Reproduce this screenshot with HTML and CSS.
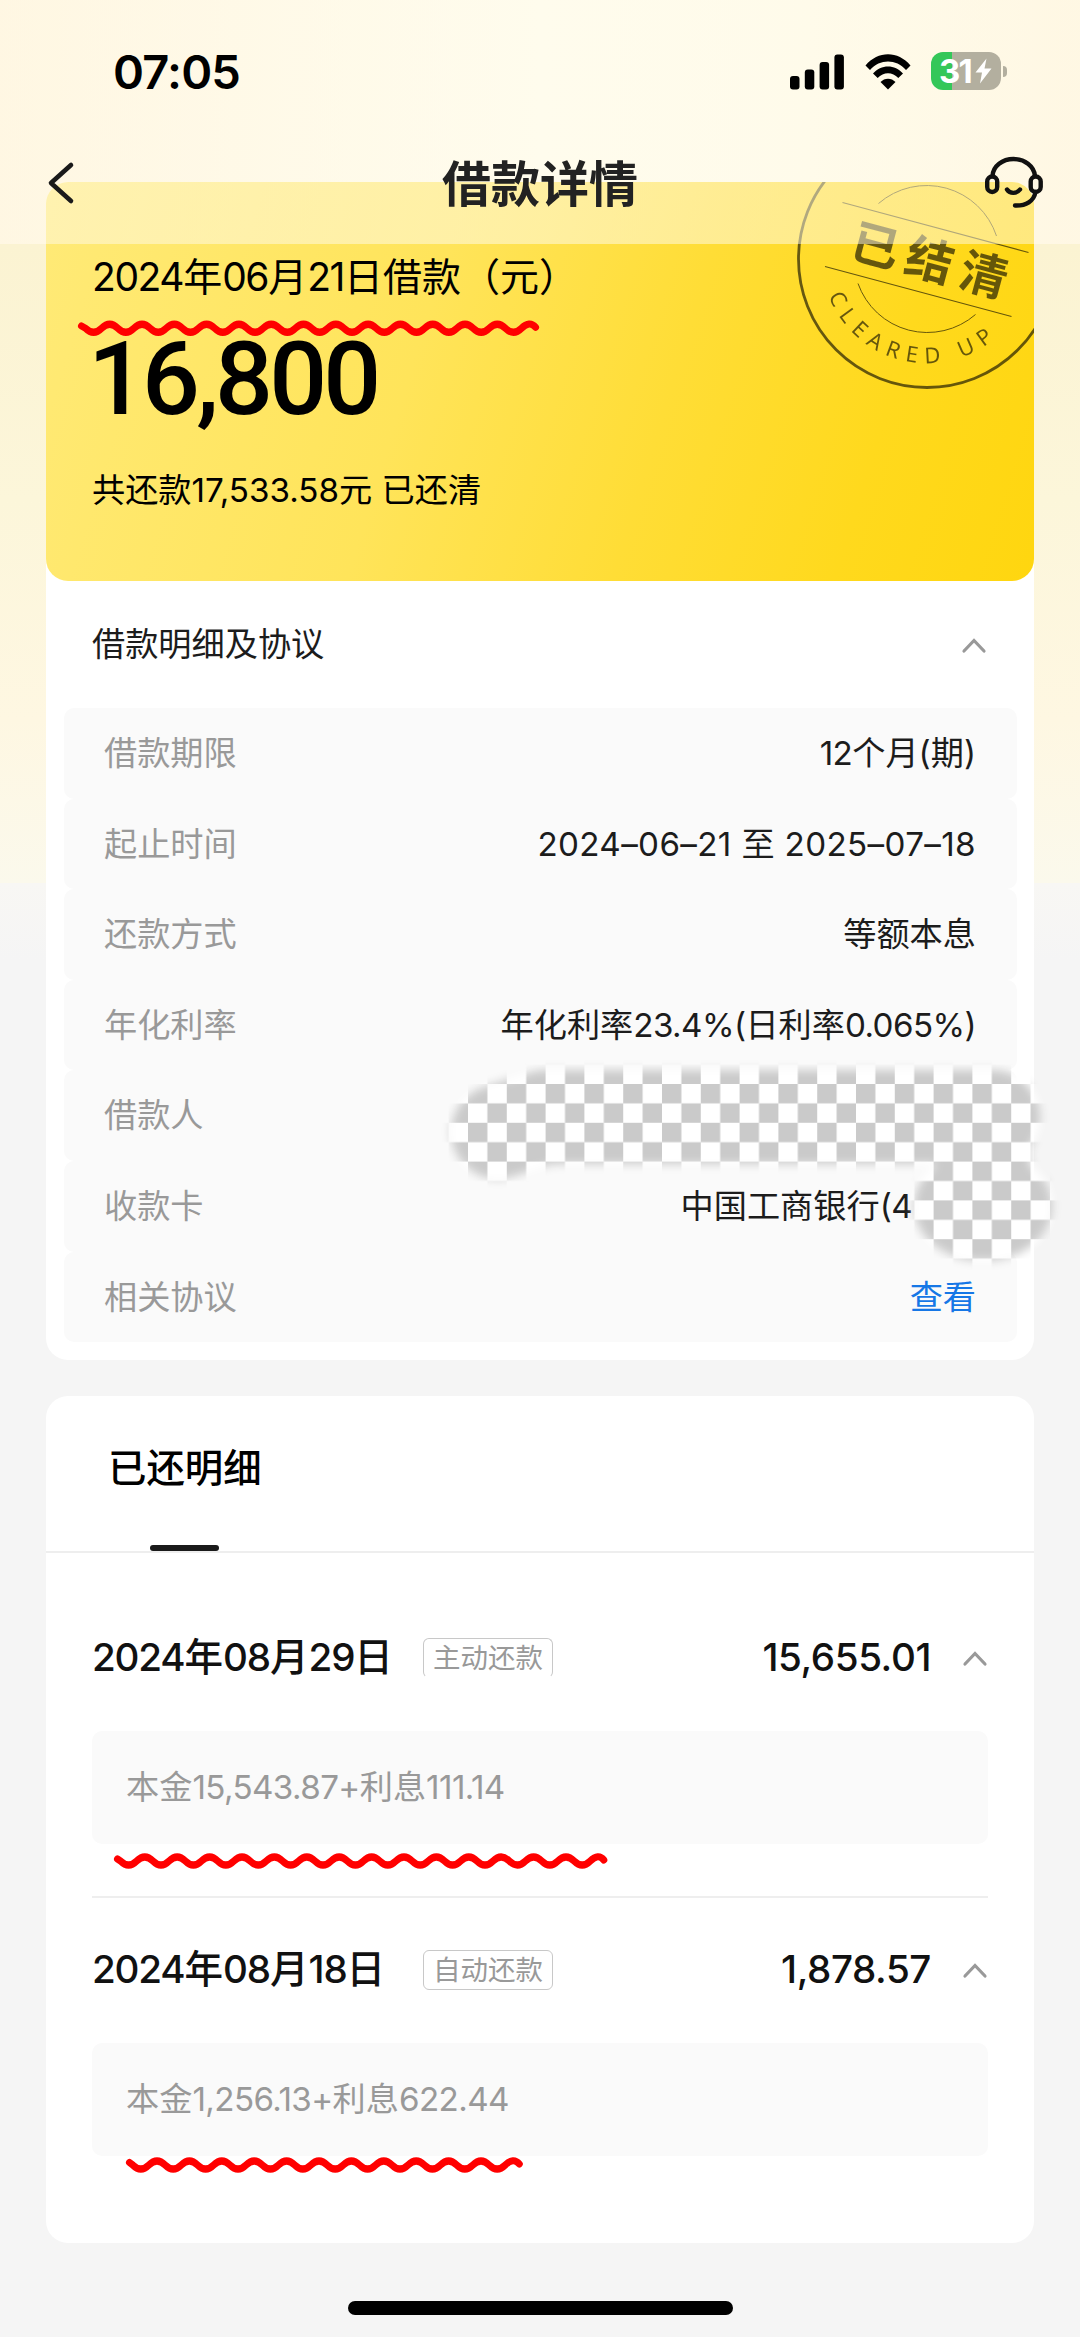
FILE: index.html
```
<!DOCTYPE html>
<html lang="zh-CN">
<head>
	<meta charset="UTF-8">
	<title>借款详情</title>
	<link rel="stylesheet" href="styles.css">
</head>
<body>
	<div class="page">
		<div class="header">
			<div class="status">
				<span class="time">07:05</span>
				<div class="status-icons">
					<svg class="signal" width="55" height="36" viewBox="0 0 55 36">
						<rect x="0" y="22" width="9.5" height="13.5" rx="3"/>
						<rect x="14.8" y="15.500" width="9.500" height="20" rx="3"/>
						<rect x="29.6" y="8" width="9.5" height="27.500" rx="3"/>
						<rect x="44.4" y="0.500" width="9.500" height="35" rx="3"/>
					</svg>
					<svg class="wifi" width="46" height="36" viewBox="0 0 46 36">
						<path d="M0.500 11.500C13 -3.500 33 -3.500 45.500 11.500L41 16C31 4.800 15 4.800 5 16Z"/>
						<path d="M8 19.500C16 10 30 10 38 19.500L33.300 24C27.500 17.500 18.500 17.500 12.700 24Z"/>
						<path d="M15.500 28C19.500 23.500 26.500 23.500 30.500 28L23 35.500Z"/>
					</svg>
					<div class="battery">
						<span>31</span>
						<svg width="17" height="26" viewBox="0 0 17 26"><path d="M11.500 0.500L0.500 14.500H7L5 25.500L16.500 10.500H9.500Z" fill="#fff"/></svg>
					</div>
				</div>
			</div>
			<div class="nav">
				<svg class="back" width="30" height="46" viewBox="0 0 30 46"><path d="M25 5L5 23L25 41"/></svg>
				<h1>借款详情</h1>
				<svg class="service" width="58" height="54" viewBox="0 0 58 54">
					<path d="M7.500 20C8 10 17.500 3 28.500 3S49 10 50 20"/>
					<rect x="2.200" y="20.500" width="10" height="15.500" rx="5"/>
					<rect x="45.700" y="20.500" width="10" height="15.500" rx="5"/>
					<path d="M50.500 36C49 45 41 50 30 49.500"/>
					<path d="M22 33.500C25 38 31.500 38 35 33.500"/>
				</svg>
			</div>
		</div>

		<div class="card">
			<div class="summary">
				<p class="sum-title"><b>2024</b>年<b>06</b>月<b>21</b>日借款（元）</p>
				<p class="sum-money">16,800</p>
				<p class="sum-total">共还款<b>17,533.58</b>元 已还清</p>
				<svg class="stamp" width="260" height="260" viewBox="0 0 260 260">
					<defs><path id="stampPath" d="M31.600 166.800A105.500 105.500 0 0 0 204 204"/></defs>
					<g fill="none" stroke="#000">
						<circle cx="130" cy="130" r="128.500" stroke-width="2.800"/>
						<path d="M81.500 74.500A73.500 73.500 0 0 1 199.500 107M61 154.500A73.500 73.500 0 0 0 178.500 185.500" stroke-width="1"/>
						<path d="M45.500 73.500L231.500 123.500M28 137.500L214.500 187.500" stroke-width="1.200"/>
					</g>
					<text class="stamp-cn" x="137" y="127" transform="rotate(15 130 130)">已结清</text>
					<text class="stamp-en"><textPath href="#stampPath" textLength="199">CLEARED UP</textPath></text>
				</svg>
			</div>
			<div class="fold">
				<span>借款明细及协议</span>
				<svg class="arrow" width="26" height="18" viewBox="0 0 26 18"><path d="M3 15L13 4.500L23 15"/></svg>
			</div>
			<ul class="info">
				<li><span>借款期限</span><em><b>12</b>个月(期)</em></li>
				<li><span>起止时间</span><em class="range">2024–06–21 至 2025–07–18</em></li>
				<li><span>还款方式</span><em>等额本息</em></li>
				<li><span>年化利率</span><em>年化利率<b>23.4%(</b>日利率<b>0.065%)</b></em></li>
				<li><span>借款人</span></li>
				<li><span>收款卡</span><em class="bank">中国工商银行<b>(4</b></em></li>
				<li><span>相关协议</span><a href="#">查看</a></li>
			</ul>
		</div>

		<div class="card paid">
			<div class="tabs"><span class="on">已还明细</span></div>
			<div class="record">
				<div class="row">
					<span class="date"><b>2024</b>年<b>08</b>月<b>29</b>日</span>
					<span class="tag tag-cut">主动还款</span>
					<span class="money">15,655.01</span>
					<svg class="arrow" width="26" height="18" viewBox="0 0 26 18"><path d="M3 15L13 4.500L23 15"/></svg>
				</div>
				<div class="detail">本金<b>15,543.87+</b>利息<b>111.14</b></div>
			</div>
			<div class="record">
				<div class="row">
					<span class="date"><b>2024</b>年<b>08</b>月<b>18</b>日</span>
					<span class="tag">自动还款</span>
					<span class="money">1,878.57</span>
					<svg class="arrow" width="26" height="18" viewBox="0 0 26 18"><path d="M3 15L13 4.500L23 15"/></svg>
				</div>
				<div class="detail">本金<b>1,256.13+</b>利息<b>622.44</b></div>
			</div>
		</div>

		<div class="home-bar"></div>

		<!-- red marks and the hidden name / card number -->
		<svg class="marks" width="1080" height="2337" viewBox="0 0 1080 2337">
			<defs>
				<pattern id="check" x="468" y="1084" width="38.800" height="38.800" patternUnits="userSpaceOnUse">
					<rect width="38.800" height="38.800" fill="#fff"/>
					<rect width="19.400" height="19.400" fill="#cacaca"/>
					<rect x="19.400" y="19.400" width="19.400" height="19.400" fill="#cacaca"/>
				</pattern>
				<filter id="soft" filterUnits="userSpaceOnUse" x="400" y="1020" width="680" height="280"><feGaussianBlur stdDeviation="5"/></filter>
				<mask id="brush" maskUnits="userSpaceOnUse" x="400" y="1020" width="680" height="280">
					<g filter="url(#soft)" fill="none" stroke="#fff" stroke-width="94" stroke-linecap="round" stroke-linejoin="round">
						<path d="M498 1132L545 1117H993"/>
						<path d="M983 1150V1162"/>
						<ellipse cx="983" cy="1206" rx="40" ry="26" stroke-width="58" fill="#fff"/>
					</g>
				</mask>
			</defs>
			<rect x="400" y="1020" width="680" height="280" fill="url(#check)" mask="url(#brush)"/>
			<g class="wave">
				<path d="M81.500 326L85.500 328.300q8.070 8 16.150 0t16.150 0t16.150 0t16.150 0t16.150 0t16.150 0t16.150 0t16.150 0t16.150 0t16.150 0t16.150 0t16.150 0t16.150 0t16.150 0t16.150 0t16.150 0t16.150 0t16.150 0t16.150 0t16.150 0t16.150 0t16.150 0t16.150 0t16.150 0t16.150 0t16.150 0t16.150 0t14 -1"/>
				<path d="M117.500 1859L120.500 1861q8.100 8 16.200 0t16.200 0t16.200 0t16.200 0t16.200 0t16.200 0t16.200 0t16.200 0t16.200 0t16.200 0t16.200 0t16.200 0t16.200 0t16.200 0t16.200 0t16.200 0t16.200 0t16.200 0t16.200 0t16.200 0t16.200 0t16.200 0t16.200 0t16.200 0t16.200 0t16.200 0t16.200 0t16.200 0t16.200 0t13.500 -1"/>
				<path d="M129.500 2162.500L132.700 2165q8.100 8 16.200 0t16.200 0t16.200 0t16.200 0t16.200 0t16.200 0t16.200 0t16.200 0t16.200 0t16.200 0t16.200 0t16.200 0t16.200 0t16.200 0t16.200 0t16.200 0t16.200 0t16.200 0t16.200 0t16.200 0t16.200 0t16.200 0t16.200 0t14 -1"/>
			</g>
		</svg>
	</div>
</body>
</html>
```
FILE: styles.css
```
body,h1,p,ul,li{margin: 0;padding: 0;}
ul{list-style: none;}
a{text-decoration: none;}
em{font-style: normal;}
body{font: 400 33.2px/1.5 Inter,"Noto Sans CJK SC",sans-serif;color: #1c1c1c;background: #f5f5f5;}
b{font-weight: inherit;letter-spacing: -0.018em;}
.page{position: relative;width: 1080px;height: 2337px;overflow: hidden;box-sizing: border-box;padding: 182px 46px 0;background: linear-gradient(180deg,rgba(245,245,245,0) 883px,#f8f7f4 883px,#f5f5f5 960px) no-repeat,linear-gradient(180deg,#fbf3d2 244px,#fcf6da 500px,#fef7e2 720px,#fbf9ec 883px);}

.header{position: absolute;top: 0;left: 0;z-index: 2;width: 1080px;height: 244px;background: linear-gradient(90deg,rgba(255,250,236,.48),rgba(255,253,242,.5) 50%,rgba(255,251,238,.48));}
.page:before{content: "";position: absolute;top: 0;left: 0;width: 1080px;height: 244px;background: linear-gradient(90deg,#fff4da,#fffbe8 50%,#fffae4 75%,#fff4da);}
.status{display: flex;justify-content: space-between;height: 144px;padding: 0 79px 0 113px;}
.time{padding-top: 36px;font: 600 47px/72px Inter;letter-spacing: -0.8px;color: #000;}
.status-icons{display: flex;align-items: flex-start;padding-top: 54px;}
.wifi{margin: 0 20px;}
.battery{position: relative;display: flex;align-items: center;box-sizing: border-box;width: 70px;height: 38px;margin-top: -2px;padding-left: 8px;border-radius: 12px;background: linear-gradient(90deg,#34c759 21.500px,#b3af9f 21.500px);font: 700 33px/38px Inter;letter-spacing: -1.8px;color: #fff;}
.battery svg{margin-left: 4px;}
.battery:after{content: "";position: absolute;right: -6px;top: 14px;width: 4px;height: 11px;border-radius: 0 5px 5px 0;background: #b3af9f;}
.nav{display: flex;justify-content: space-between;align-items: center;height: 77px;padding: 0 37px 0 46px;}
.nav h1{padding-left: 19px;font: 700 49px/72px "Noto Sans CJK SC",sans-serif;margin-top: -3px;color: #222;}
.back{fill: none;stroke: #1a1a1a;stroke-width: 4.600;stroke-linecap: round;stroke-linejoin: round;}
.service{fill: none;stroke: #111;stroke-width: 4.400;stroke-linecap: round;}

.card{position: relative;z-index: 1;background: #fff;border-radius: 22px;height: 1178px;}
.summary{position: relative;height: 399px;overflow: hidden;border-radius: 22px;box-sizing: border-box;padding: 65px 46px 0;background: linear-gradient(107deg,#ffea77 0%,#ffe45a 38%,#ffdd36 62%,#ffd91d 82%,#ffd60f 100%);color: #000;}
.sum-title{font-size: 39px;line-height: 60px;}
.sum-title b{letter-spacing: -0.036em;}
.sum-money{margin-left: -4px;font: 500 102px/120px Roboto,sans-serif;letter-spacing: -3.900px;padding-top: 12px;}
.sum-total{padding-top: 26px;line-height: 50px;}
.sum-total b{letter-spacing: 0;}
.stamp{position: absolute;left: 751px;top: -53px;opacity: .6;}
.stamp-cn{font: 700 48px "Noto Sans CJK SC";letter-spacing: 8px;text-anchor: middle;dominant-baseline: central;}
.stamp-en{font: 400 22px "Noto Sans";}
.fold{display: flex;justify-content: space-between;align-items: center;height: 127px;padding: 0 47px 0 46px;}
.arrow{fill: none;stroke: #999;stroke-width: 3.200;stroke-linecap: round;}
.info{padding: 0 17px 0 18px;}
.info li{display: flex;justify-content: space-between;height: 90.600px;line-height: 91.600px;padding: 0 41px 0 40px;border-radius: 10px;background: #fafafa;}
.info span{color: #999;}
.info .range{letter-spacing: 0.35px;}
.info .bank{padding-right: 64px;}
.info a{color: #1677e6;}

.paid{height: 847px;margin-top: 36px;}
.tabs{display: flex;height: 155px;padding-left: 62px;border-bottom: 2px solid #eee;}
.tabs span{position: relative;font-size: 38.400px;font-weight: 500;line-height: 144px;color: #000;}
.tabs .on:after{content: "";position: absolute;left: 42px;bottom: 0;width: 69px;height: 6px;border-radius: 3px;background: #1a1a1a;}
.record{margin: 0 46px 0 46px;height: 312px;box-sizing: border-box;}
.tabs + .record{height: 345px;padding-top: 33px;border-bottom: 2px solid #eee;}
.row{display: flex;align-items: center;height: 143px;padding-bottom: 2px;}
.date,.money{font-size: 38.600px;font-weight: 500;color: #111;}
.date{width: 331px;white-space: nowrap;}
.date b{letter-spacing: -0.03em;}
.tag{box-sizing: border-box;width: 130px;height: 40px;border: 1.500px solid #c8c8c8;border-radius: 6px;font-size: 27.500px;line-height: 38px;text-align: center;color: #999;}
.tag-cut{border-bottom-color: transparent;}
.money{margin-left: auto;letter-spacing: -0.4px;padding-right: 31px;}
.detail{height: 113px;line-height: 112px;padding-left: 34px;border-radius: 10px;background: #fafafa;color: #999;}

.home-bar{width: 385px;height: 14px;margin: 58px auto 0;border-radius: 7px;background: #000;}
.marks{position: absolute;top: 0;left: 0;z-index: 3;pointer-events: none;}
.wave{fill: none;stroke: #f00;stroke-width: 7;stroke-linecap: round;}
```
